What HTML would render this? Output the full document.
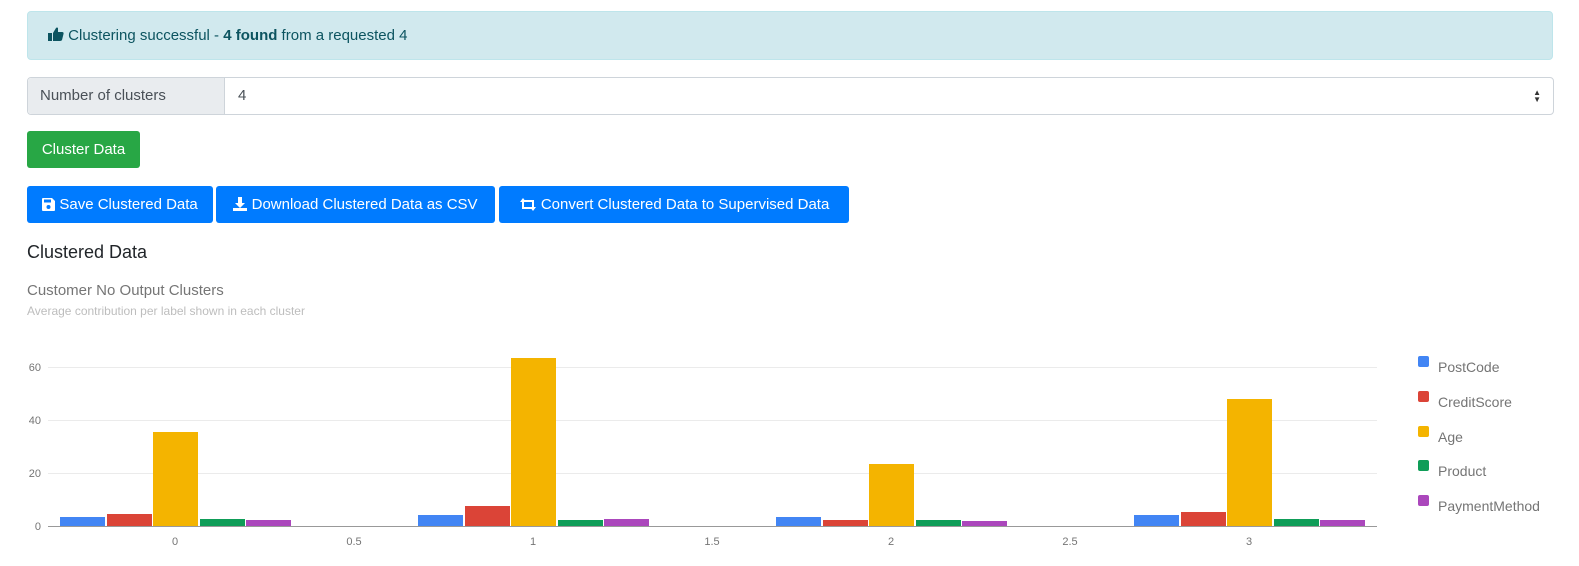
<!DOCTYPE html>
<html><head><meta charset="utf-8"><style>
body{margin:0;width:1579px;height:566px;background:#fff;font-family:"Liberation Sans",sans-serif;position:relative;overflow:hidden}
.a{position:absolute}
.alert{left:27px;top:11px;width:1524px;height:47px;background:#d1e9ee;border:1px solid #bee5eb;border-radius:4px;color:#0c5460;font-size:15px;line-height:47px;box-sizing:content-box}
.sel{left:27px;top:77px;width:1525px;height:36px;border:1px solid #ced4da;border-radius:4px;font-size:15px;color:#495057}
.lab{position:absolute;left:0;top:0;width:197px;height:36px;background:#e9ecef;border-right:1px solid #ced4da;line-height:36px;padding-left:12px;box-sizing:border-box;border-radius:4px 0 0 4px}
.btn{position:absolute;color:#fff;font-size:15px;border-radius:3px;line-height:37px;text-align:center;height:37px}
.blue{background:#007bff;top:186px}
.btn svg{vertical-align:-2px}
</style></head><body>
<div class="a alert"><span style="padding-left:20px"><svg width="16" height="14" viewBox="0 0 16 14" style="vertical-align:-1px"><rect x="0" y="6" width="4" height="8" fill="#0c5460"/><path d="M5 6 L8 1 Q9 0 10 1 L10 5 L14 5 Q16 5 15.5 7 L14 13 Q13.5 14 12 14 L5 14Z" fill="#0c5460"/></svg> Clustering successful - <b>4 found</b> from a requested 4</span></div>
<div class="a sel"><div class="lab">Number of clusters</div><span style="position:absolute;left:210px;line-height:36px">4</span><span style="position:absolute;right:12px;top:11px;font-size:8px;line-height:7px;color:#333">▲<br>▼</span></div>
<div class="btn" style="left:27px;top:131px;width:113px;background:#28a745">Cluster Data</div>
<div class="btn blue" style="left:27px;width:186px"><svg width="13" height="13" viewBox="0 0 13 13"><path d="M0 1Q0 0 1 0L10 0L13 3L13 12Q13 13 12 13L1 13Q0 13 0 12Z" fill="#fff"/><rect x="2" y="1.5" width="7" height="3" fill="#007bff"/><circle cx="6.5" cy="9" r="2" fill="#007bff"/></svg> Save Clustered Data</div>
<div class="btn blue" style="left:216px;width:279px"><svg width="14" height="14" viewBox="0 0 14 14"><path d="M5 0H9V6H12L7 11L2 6H5Z" fill="#fff"/><rect x="0" y="11" width="14" height="3" fill="#fff"/></svg> Download Clustered Data as CSV</div>
<div class="btn blue" style="left:499px;width:350px"><svg width="18" height="13" viewBox="0 0 18 13"><path d="M1 4L4 0L7 4H5V9H12L14 11H3V4Z" fill="#fff"/><path d="M17 9L14 13L11 9H13V4H6L4 2H15V9Z" fill="#fff"/></svg> Convert Clustered Data to Supervised Data</div>
<div class="a" style="left:27px;top:242px;font-size:18px;color:#212529">Clustered Data</div>
<div class="a" style="left:27px;top:282px;font-size:15px;color:#757575">Customer No Output Clusters</div>
<div class="a" style="left:27px;top:304px;font-size:12px;color:#bdbdbd">Average contribution per label shown in each cluster</div>
<svg class="a" style="left:0;top:0" width="1579" height="566" font-family="Liberation Sans" font-size="11" fill="#757575">
<g stroke="#ebebeb" stroke-width="1"><line x1="48" x2="1377" y1="367.5" y2="367.5"/><line x1="48" x2="1377" y1="420.5" y2="420.5"/><line x1="48" x2="1377" y1="473.5" y2="473.5"/></g>
<g text-anchor="end"><text x="41" y="371">60</text><text x="41" y="424">40</text><text x="41" y="477">20</text><text x="41" y="530">0</text></g>
<g>
<rect x="60" y="517" width="45" height="9" fill="#4285f4"/><rect x="107" y="514" width="45" height="12" fill="#db4437"/><rect x="153" y="432" width="45" height="94" fill="#f4b400"/><rect x="200" y="519" width="45" height="7" fill="#0f9d58"/><rect x="246" y="520" width="45" height="6" fill="#ab47bc"/>
<rect x="418" y="515" width="45" height="11" fill="#4285f4"/><rect x="465" y="506" width="45" height="20" fill="#db4437"/><rect x="511" y="358" width="45" height="168" fill="#f4b400"/><rect x="558" y="520" width="45" height="6" fill="#0f9d58"/><rect x="604" y="519" width="45" height="7" fill="#ab47bc"/>
<rect x="776" y="517" width="45" height="9" fill="#4285f4"/><rect x="823" y="520" width="45" height="6" fill="#db4437"/><rect x="869" y="464" width="45" height="62" fill="#f4b400"/><rect x="916" y="520" width="45" height="6" fill="#0f9d58"/><rect x="962" y="521" width="45" height="5" fill="#ab47bc"/>
<rect x="1134" y="515" width="45" height="11" fill="#4285f4"/><rect x="1181" y="512" width="45" height="14" fill="#db4437"/><rect x="1227" y="399" width="45" height="127" fill="#f4b400"/><rect x="1274" y="519" width="45" height="7" fill="#0f9d58"/><rect x="1320" y="520" width="45" height="6" fill="#ab47bc"/>
</g>
<line x1="48" x2="1377" y1="526.5" y2="526.5" stroke="#999"/>
<g text-anchor="middle"><text x="175" y="545">0</text><text x="354" y="545">0.5</text><text x="533" y="545">1</text><text x="712" y="545">1.5</text><text x="891" y="545">2</text><text x="1070" y="545">2.5</text><text x="1249" y="545">3</text></g>
<g font-size="14">
<rect x="1418" y="356" width="11" height="11" rx="2" fill="#4285f4"/><text x="1438" y="372">PostCode</text>
<rect x="1418" y="391" width="11" height="11" rx="2" fill="#db4437"/><text x="1438" y="407">CreditScore</text>
<rect x="1418" y="426" width="11" height="11" rx="2" fill="#f4b400"/><text x="1438" y="442">Age</text>
<rect x="1418" y="460" width="11" height="11" rx="2" fill="#0f9d58"/><text x="1438" y="476">Product</text>
<rect x="1418" y="495" width="11" height="11" rx="2" fill="#ab47bc"/><text x="1438" y="511">PaymentMethod</text>
</g>
</svg>
</body></html>
